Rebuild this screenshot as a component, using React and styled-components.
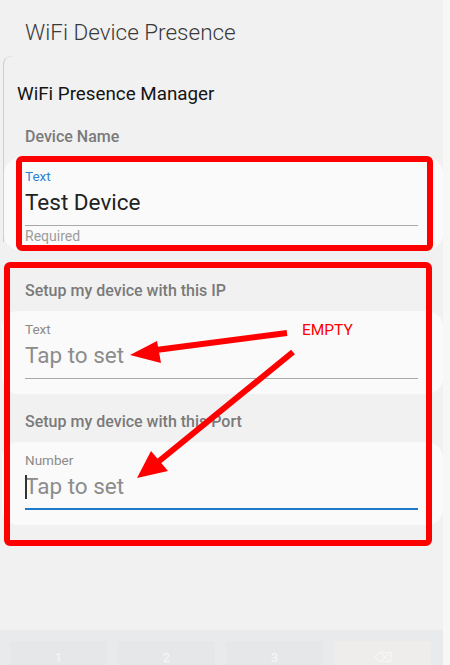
import React from "react";
import styled, { createGlobalStyle } from "styled-components";

const GlobalStyle = createGlobalStyle`
    html, body {
        margin: 0;
        padding: 0;
        background: #f1f1f1;
    }
    body {
        font-family: Roboto, "Liberation Sans", sans-serif;
    }
`;

const fields = [
    {
        section: "Device Name",
        label: "Text",
        value: "Test Device",
        highlight: true,
        helper: "Required",
    },
    {
        section: "Setup my device with this IP",
        label: "Text",
        value: "",
    },
    {
        section: "Setup my device with this Port",
        label: "Number",
        value: "",
        active: true,
    },
];

const keys = ["1", "2", "3", "⌫"];

const Field = ({ section, label, value, highlight, helper, active, first }) => (
    <St.Section $first={first}>
        <St.SectionLabel>{section}</St.SectionLabel>
        <St.Card $helper={!!helper}>
            <St.FieldLabel $highlight={highlight}>{label}</St.FieldLabel>
            <St.Input $active={active}>
                {active && <St.Caret />}
                <St.Value $empty={!value}>{value || "Tap to set"}</St.Value>
            </St.Input>
            {helper && <St.Helper>{helper}</St.Helper>}
        </St.Card>
    </St.Section>
);

const App = () => {
    return (
        <>
            <GlobalStyle />
            <St.Screen>
                <St.Main>
                    <St.TitleBar>WiFi Device Presence</St.TitleBar>
                    <St.Panel>
                        <St.PanelTitle>WiFi Presence Manager</St.PanelTitle>
                        {fields.map((f, i) => (
                            <Field key={f.section} {...f} first={i === 0} />
                        ))}
                    </St.Panel>
                    <St.Keyboard>
                        {keys.map((k, i) => (
                            <St.Key key={k} $action={i === 3}>{k}</St.Key>
                        ))}
                    </St.Keyboard>
                </St.Main>
                <St.Strip />

                {/* red markup drawn over the screenshot */}
                <St.Markup width="450" height="665" viewBox="0 0 450 665">
                    <rect x="19" y="159" width="411" height="89" rx="3" fill="none" stroke="#ff0000" strokeWidth="6" />
                    <rect x="7" y="265" width="422" height="278" rx="3" fill="none" stroke="#ff0000" strokeWidth="6" />
                    <line x1="287" y1="333" x2="156" y2="350" stroke="#ff0000" strokeWidth="6" />
                    <polygon points="130,355 157,341 161,363" fill="#ff0000" />
                    <line x1="293" y1="352" x2="158" y2="462" stroke="#ff0000" strokeWidth="6" />
                    <polygon points="137,478 151,451 168,471" fill="#ff0000" />
                </St.Markup>
                <St.Note>EMPTY</St.Note>
            </St.Screen>
        </>
    );
};

export default App;

const St = {
    Screen: styled.div`
        position: relative;
        display: flex;
        width: 450px;
        height: 665px;
        overflow: hidden;
        background: #f1f1f1;
    `,

    Main: styled.div`
        display: flex;
        flex-direction: column;
        width: 443px;
        height: 100%;
    `,

    Strip: styled.div`
        width: 7px;
        height: 100%;
        background: #f8f7f6;
    `,

    TitleBar: styled.div`
        height: 35px;
        padding: 20px 0 0 25px;
        font-size: 22.5px;
        font-weight: 300;
        line-height: 24px;
        color: #3a3a3a;
    `,

    Panel: styled.div`
        position: relative;
        display: flex;
        flex-direction: column;

        &::before {
            content: "";
            position: absolute;
            left: 3px;
            top: 1px;
            width: 8px;
            height: 185px;
            border-left: 1px solid #cfcfcf;
            border-top: 1px solid #e2e2e2;
            border-top-left-radius: 8px;
        }
    `,

    PanelTitle: styled.div`
        margin: 27px 0 0 17px;
        font-size: 18.8px;
        line-height: 24px;
        color: #141414;
    `,

    Section: styled.div`
        display: flex;
        flex-direction: column;
        margin-top: ${({ $first }) => ($first ? "21px" : "18px")};

        &:nth-child(3) {
            margin-top: 31px;
        }
    `,

    SectionLabel: styled.div`
        padding-left: 25px;
        font-size: 16px;
        font-weight: 500;
        line-height: 20px;
        color: #7a7a7a;
    `,

    Card: styled.div`
        position: relative;
        margin: ${({ $helper }) => ($helper ? "11px 0 0 4px" : "10px 0 0 2px")};
        padding: 10px 25px ${({ $helper }) => ($helper ? "6px" : "15px")} ${({ $helper }) => ($helper ? "21px" : "23px")};
        background: #fafafa;
        border-radius: 16px;
    `,

    FieldLabel: styled.div`
        font-size: 13.5px;
        line-height: 16px;
        color: ${({ $highlight }) => ($highlight ? "#2d84d2" : "#8a8a8a")};
    `,

    Input: styled.div`
        position: relative;
        display: flex;
        align-items: center;
        margin-top: 4px;
        padding-bottom: ${({ $active }) => ($active ? "8px" : "9px")};
        border-bottom: ${({ $active }) => ($active ? "2px solid #1f78c8" : "1px solid #a8a8a8")};
    `,

    Caret: styled.span`
        position: absolute;
        left: 0;
        top: 3px;
        width: 1.5px;
        height: 24px;
        background: #333;
    `,

    Value: styled.div`
        font-size: 22.5px;
        line-height: 28px;
        color: ${({ $empty }) => ($empty ? "#8c8c8c" : "#222222")};
    `,

    Helper: styled.div`
        margin-top: 2px;
        font-size: 14px;
        line-height: 16px;
        color: #9c9c9c;
    `,

    Keyboard: styled.div`
        display: grid;
        grid-template-columns: repeat(4, 1fr);
        gap: 11px;
        margin-top: auto;
        height: 24px;
        padding: 11px 12px 0 10px;
        background: #e9eaec;
        overflow: hidden;
    `,

    Key: styled.div`
        height: 24px;
        padding-top: 9px;
        box-sizing: border-box;
        text-align: center;
        font-size: 13px;
        line-height: 15px;
        color: #f7f7f8;
        background: ${({ $action }) => ($action ? "#efedeb" : "#e6e7e9")};
    `,

    Markup: styled.svg`
        position: absolute;
        left: 0;
        top: 0;
        pointer-events: none;
    `,

    Note: styled.div`
        position: absolute;
        left: 302px;
        top: 321px;
        font-size: 15.5px;
        line-height: 18px;
        color: #ff0000;
    `,
};
